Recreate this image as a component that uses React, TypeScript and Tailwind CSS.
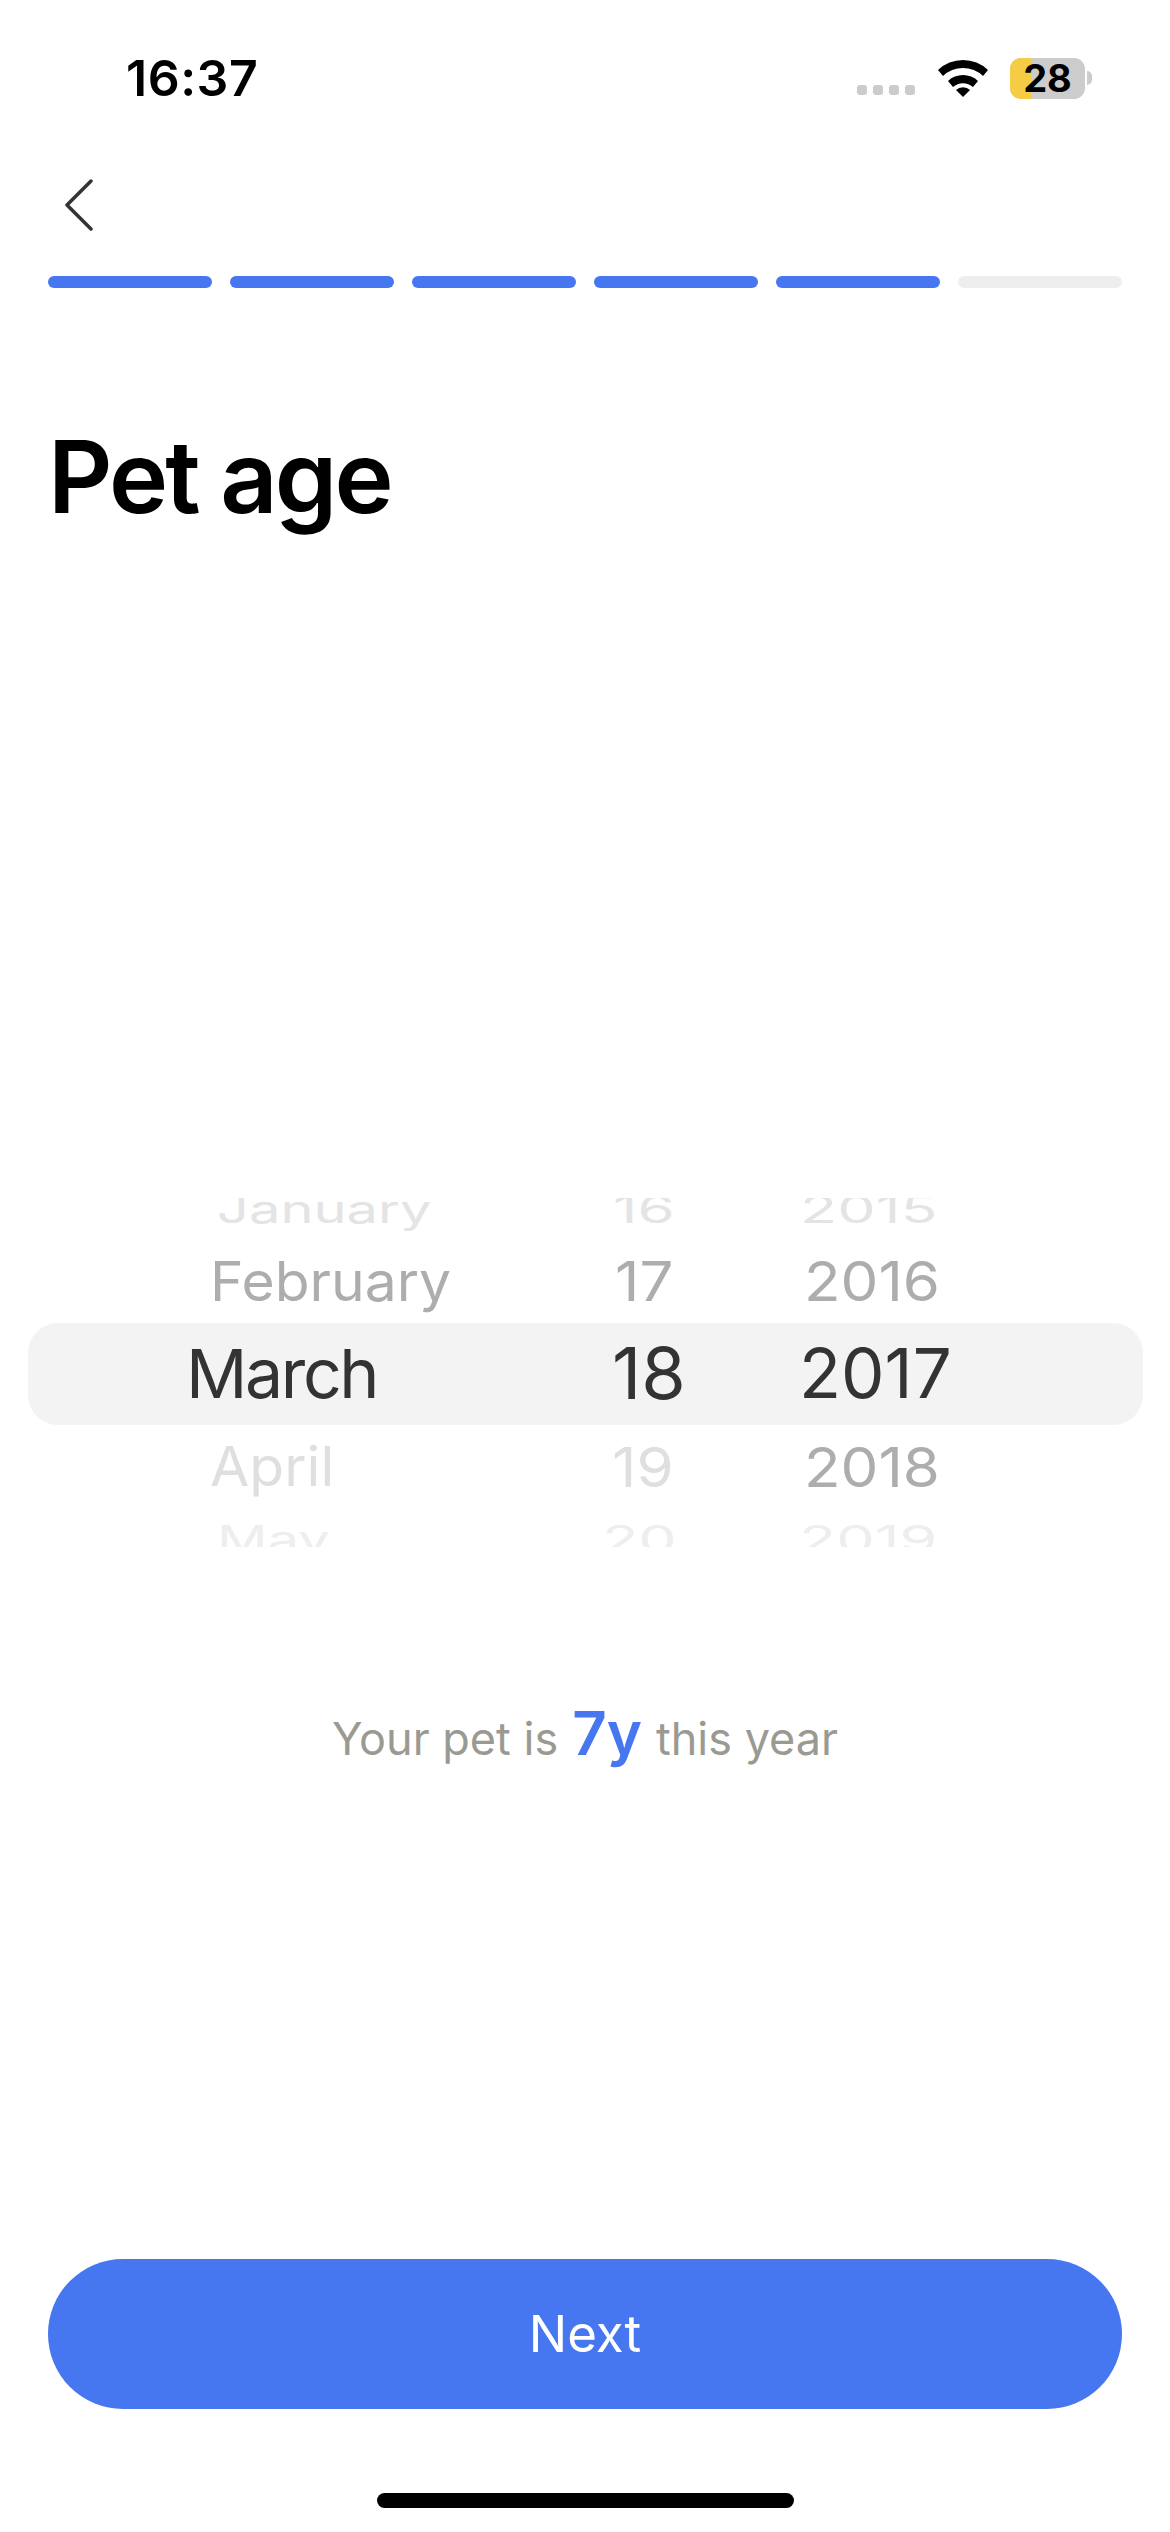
import React from 'react';

const FONT = "font-['Inter','Liberation_Sans',sans-serif]";

type WheelItem = { label: string; className: string };

const rowHeights = ['h-[70px]', 'h-[74px]', 'h-[110px]', 'h-[77px]', 'h-[68px]'];

const months: WheelItem[] = [
  { label: 'January', className: 'pl-[217px] text-[#e4e4e4] text-[56px] scale-y-[0.69]' },
  { label: 'February', className: 'pl-[210px] text-[#adadad] text-[57px] scale-y-[0.96]' },
  { label: 'March', className: 'pl-[186px] text-[#333333] text-[68px] tracking-[-2.4px]' },
  { label: 'April', className: 'pl-[210px] text-[#dfdfdf] text-[57px] scale-y-[0.96]' },
  { label: 'May', className: 'pl-[217px] text-[#eeeeee] text-[56px] scale-y-[0.69]' },
];

const days: WheelItem[] = [
  { label: '16', className: 'pl-[13px] text-[#e4e4e4] text-[60px] scale-y-[0.63]' },
  { label: '17', className: 'pl-[15px] text-[#adadad] text-[60px] scale-y-[0.92]' },
  { label: '18', className: 'pl-[12px] text-[#333333] text-[72px]' },
  { label: '19', className: 'pl-[12px] text-[#dfdfdf] text-[60px] scale-y-[0.92]' },
  { label: '20', className: 'pl-[2px] text-[#eeeeee] text-[60px] scale-y-[0.63]' },
];

const years: WheelItem[] = [
  { label: '2015', className: 'pl-[10px] text-[#e4e4e4] text-[61px] scale-y-[0.63]' },
  { label: '2016', className: 'pl-[14px] text-[#adadad] text-[60px] scale-y-[0.92]' },
  { label: '2017', className: 'pl-[9px] text-[#333333] text-[69px]' },
  { label: '2018', className: 'pl-[14px] text-[#adadad] text-[60px] scale-y-[0.92]' },
  { label: '2019', className: 'pl-[9px] text-[#eeeeee] text-[61px] scale-y-[0.63]' },
];

const WheelColumn = ({ items, className }: { items: WheelItem[]; className: string }) => (
  <div className={`flex flex-col ${className}`}>
    {items.map((item, index) => (
      <div
        key={item.label}
        className={`flex items-center leading-none whitespace-nowrap ${rowHeights[index]} ${item.className}`}
      >
        {item.label}
      </div>
    ))}
  </div>
);

const StatusBar = () => (
  <div className="flex items-center justify-between h-[118px] pt-[38px] pl-[126px] pr-[78px]">
    <span className="text-[50px] font-semibold leading-none tracking-[0.5px] text-black">16:37</span>
    <div className="flex items-center">
      <div className="flex items-center gap-[6px] mt-[24px]">
        {[0, 1, 2, 3].map((dot) => (
          <span key={dot} className="w-[10px] h-[10px] rounded-[3px] bg-[#cccccc]" />
        ))}
      </div>
      <svg viewBox="0 0 50 38" className="w-[50px] h-[38px] ml-[23px]">
        <path d="M0 11 A36 36 0 0 1 50 11 L45 17 A29 29 0 0 0 5 17 Z" fill="#000" />
        <path d="M10 22 A22 22 0 0 1 40 22 L35 28 A15 15 0 0 0 15 28 Z" fill="#000" />
        <path d="M18 31 A10 10 0 0 1 32 31 L25 38 Z" fill="#000" />
      </svg>
      <div className="relative flex items-center justify-center w-[75px] h-[41px] ml-[22px] rounded-[11px] overflow-hidden bg-[#cccccc]">
        <span className="absolute left-0 top-0 bottom-0 w-[21px] bg-[#f6cc45]" />
        <span className="relative text-[38px] font-bold leading-none text-black">28</span>
      </div>
      <span className="w-[5px] h-[14px] ml-[2px] rounded-r-full bg-[#cccccc]" />
    </div>
  </div>
);

export default function App() {
  return (
    <div className={`relative w-[1170px] h-[2532px] overflow-hidden bg-white ${FONT}`}>
      <StatusBar />

      <div className="pl-[64px] mt-[61px] h-[97px]">
        <svg viewBox="0 0 30 52" className="w-[30px] h-[52px]" fill="none">
          <path d="M27 2 L3 26 L27 50" stroke="#333333" strokeWidth="3.5" strokeLinecap="round" strokeLinejoin="round" />
        </svg>
      </div>

      <div className="flex gap-[18px] px-[48px]">
        {[0, 1, 2, 3, 4, 5].map((step) => (
          <div
            key={step}
            className={`flex-1 h-[12px] rounded-full ${step < 5 ? 'bg-[#4777f0]' : 'bg-[#eeeeee]'}`}
          />
        ))}
      </div>

      <h1 className="mt-[134px] pl-[48px] text-[100px] font-semibold leading-[110px] tracking-[-2.8px] text-black">
        Pet age
      </h1>

      <div className="relative mt-[666px] h-[349px] overflow-hidden">
        <div className="absolute left-[28px] right-[27px] top-[125px] h-[102px] rounded-[30px] bg-[#f3f3f3]" />
        <div className="relative flex -mt-[24px]">
          <WheelColumn items={months} className="w-[600px]" />
          <WheelColumn items={days} className="w-[190px]" />
          <WheelColumn items={years} className="w-[380px]" />
        </div>
      </div>

      <p className="mt-[156px] flex items-baseline justify-center text-[45px] leading-none text-[#9b9a92]">
        Your pet is <span className="mx-[14px] text-[60px] font-semibold text-[#4777f0]">7y</span> this year
      </p>

      <div className="absolute left-0 right-0 bottom-0">
        <button className="block mx-[48px] w-[1074px] h-[150px] rounded-[75px] bg-[#4777f0] text-[51px] text-white">
          Next
        </button>
        <div className="mx-auto mt-[84px] mb-[24px] w-[417px] h-[15px] rounded-full bg-black" />
      </div>
    </div>
  );
}
